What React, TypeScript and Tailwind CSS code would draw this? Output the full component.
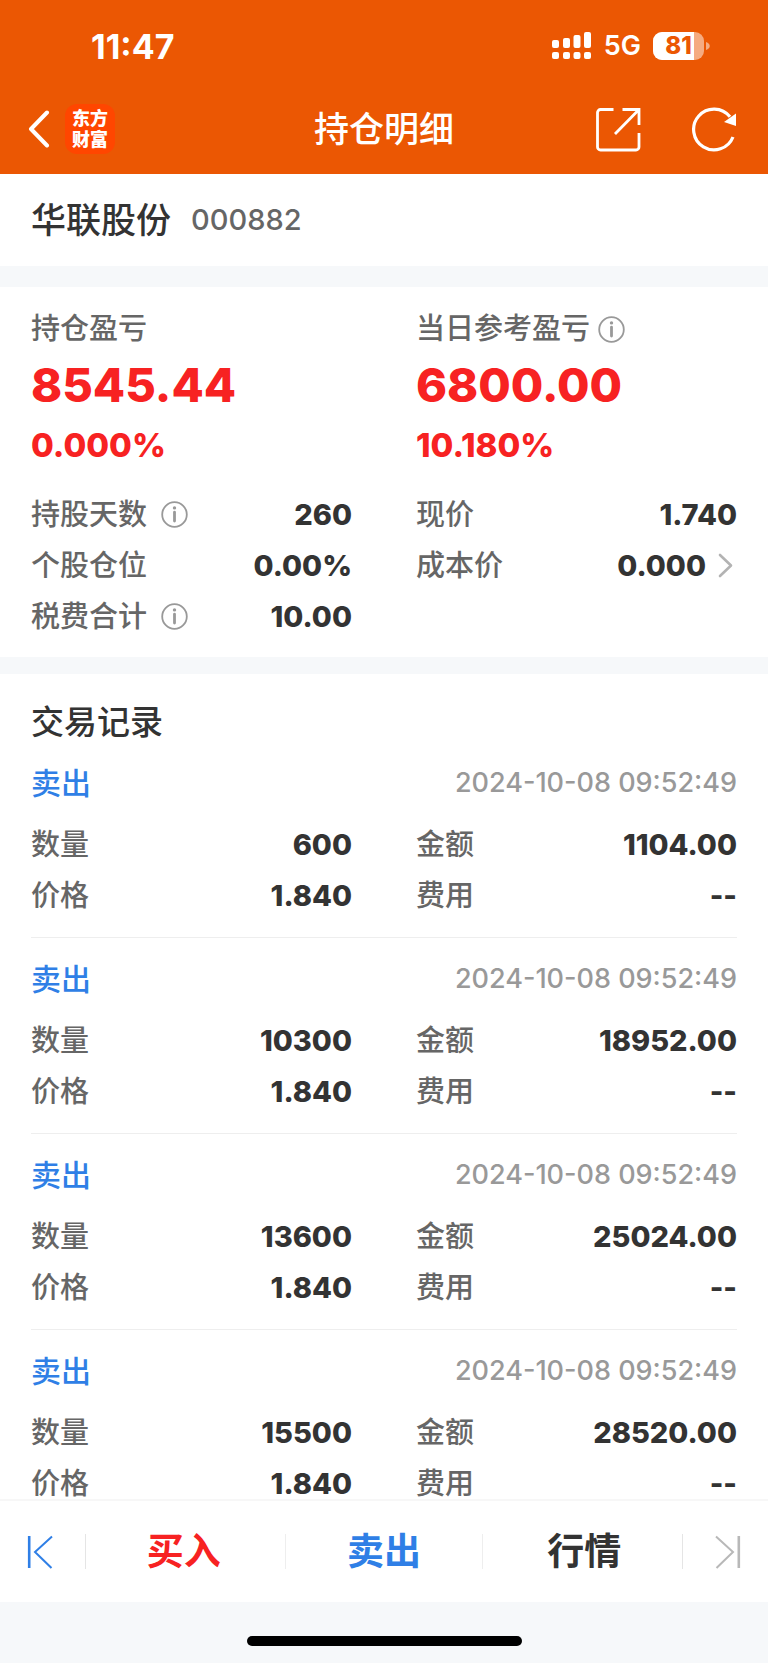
import type { ReactNode } from 'react';

interface TradeRecord {
  id: number;
  side: string;
  time: string;
  quantity: string;
  amount: string;
  price: string;
  fee: string;
}

const records: TradeRecord[] = [
  { id: 1, side: '卖出', time: '2024-10-08 09:52:49', quantity: '600', amount: '1104.00', price: '1.840', fee: '--' },
  { id: 2, side: '卖出', time: '2024-10-08 09:52:49', quantity: '10300', amount: '18952.00', price: '1.840', fee: '--' },
  { id: 3, side: '卖出', time: '2024-10-08 09:52:49', quantity: '13600', amount: '25024.00', price: '1.840', fee: '--' },
  { id: 4, side: '卖出', time: '2024-10-08 09:52:49', quantity: '15500', amount: '28520.00', price: '1.840', fee: '--' },
];

function SignalIcon() {
  return (
    <svg width="40" height="28" viewBox="0 0 40 28" fill="currentColor" aria-hidden="true">
      <rect x="0" y="8" width="7" height="8" rx="2" />
      <rect x="11" y="6" width="7" height="10" rx="2" />
      <rect x="21.500" y="3" width="7" height="13" rx="2" />
      <rect x="32" y="0" width="7" height="16" rx="2" />
      <rect x="0" y="20" width="7" height="7" rx="2" />
      <rect x="11" y="20" width="7" height="7" rx="2" />
      <rect x="21.500" y="20" width="7" height="7" rx="2" />
      <rect x="32" y="20" width="7" height="7" rx="2" />
    </svg>
  );
}

function Battery({ level }: { level: number }) {
  return (
    <div className="flex items-center gap-0.5">
      <div className="relative flex h-7 w-[51px] items-center justify-center overflow-hidden rounded-[9px] bg-white/50">
        <div className="absolute inset-y-0 left-0 bg-white" style={{ width: `${level}%` }}></div>
        <span className="relative text-2xl leading-7 font-extrabold text-[#eb5703]">{level}</span>
      </div>
      <svg width="4" height="8" viewBox="0 0 4 8" aria-hidden="true">
        <path d="M0 0C5 1.5 5 6.5 0 8Z" fill="#fff" fillOpacity="0.5" />
      </svg>
    </div>
  );
}

function InfoButton({ label }: { label: string }) {
  return (
    <button type="button" aria-label={label} className="text-[#999]">
      <svg width="27" height="27" viewBox="0 0 27 27" fill="none" stroke="currentColor" aria-hidden="true">
        <circle cx="13.5" cy="13.5" r="12.3" strokeWidth="1.8" />
        <circle cx="13.5" cy="6.9" r="1.7" fill="currentColor" stroke="none" />
        <path d="M13.5 11.2V20" strokeWidth="2.8" strokeLinecap="round" />
      </svg>
    </button>
  );
}

function Field({ label, value, info, more }: { label: string; value: string; info?: boolean; more?: ReactNode }) {
  return (
    <div className="flex h-[51px] items-center justify-between leading-none">
      <dt className="flex items-center gap-3.5 text-[29px] font-medium text-[#666]">
        {label}
        {info && <InfoButton label={`${label}说明`} />}
      </dt>
      <dd className="flex items-center gap-3 text-[29px] font-extrabold text-[#333]">
        {value}
        {more}
      </dd>
    </div>
  );
}

function RecordItem({ record }: { record: TradeRecord }) {
  return (
    <li className="border-b border-[#eee] pt-5 pb-4">
      <div className="mb-[15px] flex h-[42px] items-center justify-between">
        <span className="text-[30px] font-medium text-[#2f7fe6]">{record.side}</span>
        <time className="text-[27px] font-medium text-[#999]">{record.time}</time>
      </div>
      <dl className="grid grid-cols-2 gap-x-16">
        <Field label="数量" value={record.quantity} />
        <Field label="金额" value={record.amount} />
        <Field label="价格" value={record.price} />
        <Field label="费用" value={record.fee} />
      </dl>
    </li>
  );
}

export default function App() {
  return (
    <div className="flex h-screen flex-col bg-white font-['Inter','Noto_Sans_CJK_SC',sans-serif] text-[#333]">
      <header className="bg-[#eb5703] text-white">
        {/* Status bar */}
        <div className="flex h-[84px] items-center justify-between pt-2 pr-[58px] pl-[91px]">
          <span className="text-[34px] font-bold">11:47</span>
          <div className="flex items-center gap-3">
            <SignalIcon />
            <span className="text-[27px] font-semibold">5G</span>
            <Battery level={81} />
          </div>
        </div>

        {/* Navigation */}
        <div className="grid h-[90px] grid-cols-[1fr_auto_1fr] items-center px-7">
          <div className="flex items-center gap-[15px]">
            <button type="button" aria-label="返回">
              <svg width="22" height="38" viewBox="0 0 22 38" fill="none" stroke="currentColor" strokeWidth="4" strokeLinecap="round" strokeLinejoin="round" aria-hidden="true">
                <path d="M19 2.5L3 19L19 35.5" />
              </svg>
            </button>
            <a href="#home" className="flex h-[50px] w-[50px] flex-col items-center justify-center rounded-xl bg-[#ff4600] text-lg leading-[21px] font-black">
              <span>东方</span>
              <span>财富</span>
            </a>
          </div>
          <h1 className="text-[35px] font-medium">持仓明细</h1>
          <div className="flex items-center justify-end gap-[50px]">
            <button type="button" aria-label="分享">
              <svg width="46" height="46" viewBox="0 0 46 46" fill="none" stroke="currentColor" strokeWidth="2.8" aria-hidden="true">
                <path d="M17.500 3.500H4.500A3 3 0 0 0 1.500 6.500V41A3 3 0 0 0 4.500 44H40A3 3 0 0 0 43 41V27" />
                <path d="M26.500 3.500H43V19M42.500 4L19 28" />
              </svg>
            </button>
            <button type="button" aria-label="刷新">
              <svg width="48" height="46" viewBox="0 0 48 46" fill="none" stroke="currentColor" strokeWidth="3.2" aria-hidden="true">
                <path d="M41 31A20.400 20.400 0 1 1 38 10.800" />
                <path d="M44 7.500V20L32 16Z" fill="currentColor" stroke="none" />
              </svg>
            </button>
          </div>
        </div>
      </header>

      <main className="min-h-0 flex-1 overflow-y-auto bg-[#f6f8fa] [scrollbar-width:none]">
        {/* Stock */}
        <section className="flex h-[92px] items-center gap-5 bg-white px-[31px]">
          <h2 className="text-[35px] font-medium">华联股份</h2>
          <span className="text-[29px] font-medium text-[#666]">000882</span>
        </section>

        {/* Position summary */}
        <section className="mt-[21px] bg-white px-[31px] pt-[21px] pb-[15px]">
          <div className="mb-[19px] grid grid-cols-2 gap-x-16">
            <div>
              <h3 className="flex h-[42px] items-center text-[29px] font-medium text-[#666]">持仓盈亏</h3>
              <p className="h-[70px] text-[47px] leading-[70px] font-extrabold text-[#f72222]">8545.44</p>
              <p className="h-[50px] text-[33px] leading-[50px] font-extrabold text-[#f72222]">0.000%</p>
            </div>
            <div>
              <h3 className="flex h-[42px] items-center gap-2 text-[29px] font-medium text-[#666]">
                当日参考盈亏
                <InfoButton label="当日参考盈亏说明" />
              </h3>
              <p className="h-[70px] text-[47px] leading-[70px] font-extrabold text-[#f72222]">6800.00</p>
              <p className="h-[50px] text-[33px] leading-[50px] font-extrabold text-[#f72222]">10.180%</p>
            </div>
          </div>
          <dl className="grid grid-cols-2 gap-x-16">
            <Field label="持股天数" value="260" info />
            <Field label="现价" value="1.740" />
            <Field label="个股仓位" value="0.00%" />
            <Field
              label="成本价"
              value="0.000"
              more={
                <button type="button" aria-label="成本价详情" className="pr-1 text-[#b3b3b3]">
                  <svg width="15" height="25" viewBox="0 0 15 25" fill="none" stroke="currentColor" strokeWidth="2.6" strokeLinecap="round" strokeLinejoin="round" aria-hidden="true">
                    <path d="M2 2L13 12.500L2 23" />
                  </svg>
                </button>
              }
            />
            <Field label="税费合计" value="10.00" info />
          </dl>
        </section>

        {/* Trade records */}
        <section className="mt-[17px] bg-white px-[31px] pt-7">
          <h2 className="h-10 text-[33px] leading-10 font-medium">交易记录</h2>
          <ul>
            {records.map((record) => (
              <RecordItem key={record.id} record={record} />
            ))}
          </ul>
        </section>
      </main>

      <footer className="bg-[#f6f8fa]">
        <nav className="flex h-[103px] items-center border-t-2 border-[#f7f7f7] bg-white text-[37px] font-bold">
          <button type="button" aria-label="上一只" className="flex h-[35px] w-[86px] items-center border-r border-[#e5e5e5] pl-[27px] text-[#2f7fe6]">
            <svg width="26" height="34" viewBox="0 0 26 34" fill="none" stroke="currentColor" strokeWidth="2" aria-hidden="true">
              <path d="M2.200 1V33" strokeWidth="2.600" />
              <path d="M25 1.500L8 17L24.500 33" />
            </svg>
          </button>
          <a href="#buy" className="flex h-[35px] flex-1 items-center justify-center border-r border-[#eee] pr-1 text-[#f72222]">买入</a>
          <a href="#sell" className="flex h-[35px] flex-1 items-center justify-center text-[#2f7fe6]">卖出</a>
          <a href="#quote" className="flex h-[35px] flex-1 items-center justify-center border-l border-[#eee] pl-1">行情</a>
          <button type="button" aria-label="下一只" className="flex h-[35px] w-[86px] items-center justify-end border-l border-[#e5e5e5] pr-[27px] text-[#b8b8b8]">
            <svg width="26" height="34" viewBox="0 0 26 34" fill="none" stroke="currentColor" strokeWidth="2" aria-hidden="true">
              <path d="M23.800 1V33" strokeWidth="2.600" />
              <path d="M1 1.500L18 17L1.500 33" />
            </svg>
          </button>
        </nav>
        {/* Home indicator */}
        <div className="flex h-[61px] justify-center pt-[34px]">
          <div className="h-2.5 w-[275px] rounded-full bg-black"></div>
        </div>
      </footer>
    </div>
  );
}
